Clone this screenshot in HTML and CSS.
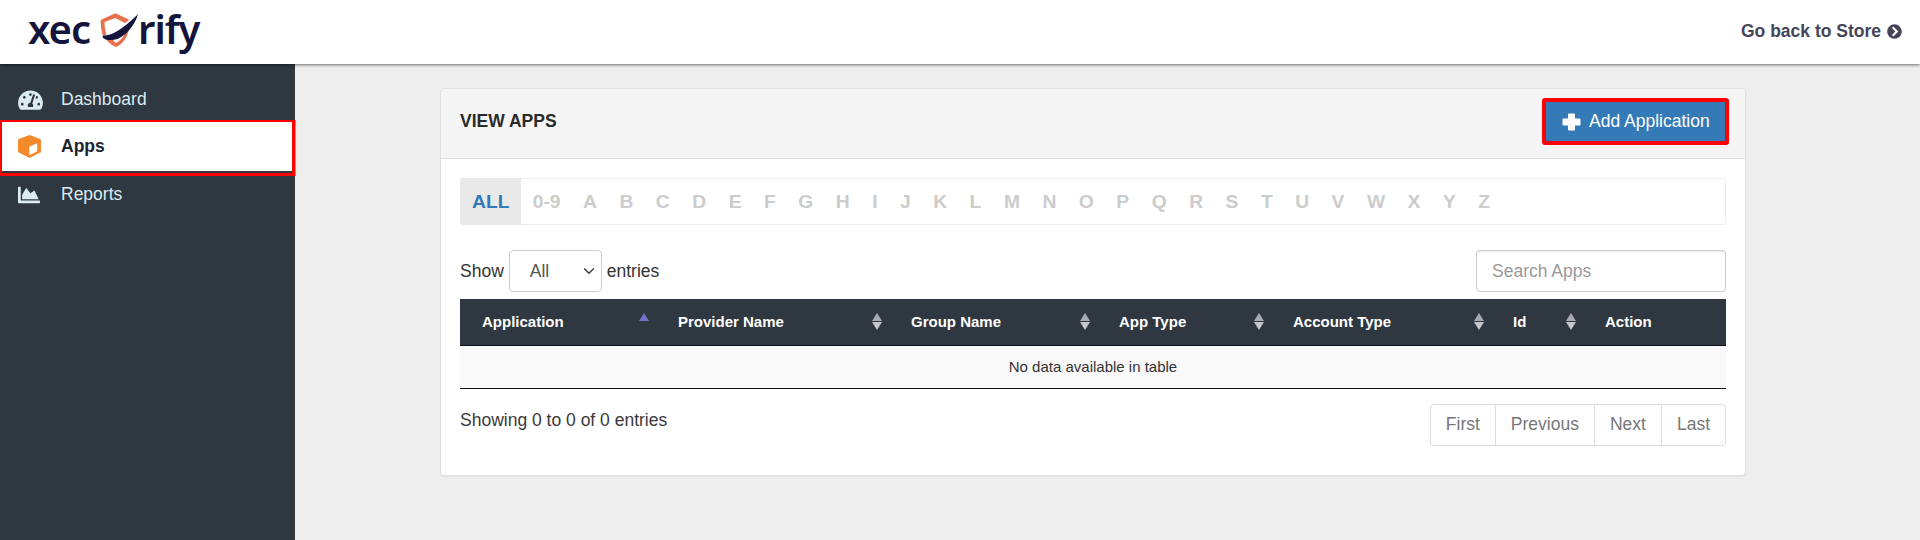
FILE: index.html
```html
<!DOCTYPE html>
<html lang="en">
<head>
<meta charset="utf-8">
<title>View Apps</title>
<link rel="stylesheet" href="styles.css">
</head>
<body>
<header class="topbar">
  <div class="logo">
    <span>xec</span>
    <svg class="logo-mark" viewBox="0 0 44 40" aria-hidden="true">
      <path class="shield" d="M17.3 3.3 L31.3 9.7 L27 13 L17.3 8 L6.5 12 C6.5 17 7.2 21 8.5 24.5 L5.2 26.5 C3.2 21 2.6 15 2.7 10 Z"/>
      <path class="shield" d="M8.5 30 C11 33 14 35.5 18 37 C24 34.5 28.5 29 30.5 21 L26.5 24 C25 28 22 31 18 33 C16.5 32 15.5 31 15 30 Z"/>
      <path class="swoosh" d="M4.7 25.7 C13 26 24 20 40 4.3 C37 14 30 24 20.5 28.5 C14 31 7 30.5 4.7 27.5 Z"/>
    </svg>
    <span>rify</span>
  </div>
  <a class="back-link" href="#">Go back to Store
    <svg class="back-icon" viewBox="0 0 512 512" aria-hidden="true"><path d="M256 8c137 0 248 111 248 248S393 504 256 504 8 393 8 256 119 8 256 8zm113.9 231L234.4 103.5c-9.4-9.4-24.6-9.4-33.9 0l-17 17c-9.4 9.4-9.4 24.6 0 33.9L285.1 256 183.5 357.6c-9.4 9.4-9.4 24.6 0 33.9l17 17c9.4 9.4 24.6 9.4 33.9 0L369.9 273c9.4-9.4 9.4-24.6 0-34z"/></svg>
  </a>
</header>
<div class="layout">
  <nav class="sidebar">
    <a class="nav-item" href="#">
      <span class="nav-icon"><svg class="icon-dash" viewBox="0 0 576 512" aria-hidden="true"><path d="M288 32C128.94 32 0 160.94 0 320c0 52.8 14.25 102.26 39.06 144.8 5.61 9.62 16.3 15.2 27.44 15.2h443c11.14 0 21.83-5.58 27.44-15.2C561.75 422.26 576 372.8 576 320c0-159.06-128.94-288-288-288zm0 64c14.71 0 26.58 10.13 30.32 23.65-1.11 2.26-2.64 4.23-3.45 6.67l-9.22 27.67c-5.13 3.49-10.97 6.01-17.64 6.01-17.67 0-32-14.33-32-32S270.33 96 288 96zM96 384c-17.67 0-32-14.33-32-32s14.33-32 32-32 32 14.33 32 32-14.33 32-32 32zm48-160c-17.67 0-32-14.33-32-32s14.33-32 32-32 32 14.33 32 32-14.33 32-32 32zm246.77-72.41l-61.33 184C343.13 347.33 352 364.54 352 384c0 11.72-3.38 22.55-8.88 32H232.88c-5.5-9.45-8.88-20.28-8.88-32 0-33.94 26.5-61.43 59.9-63.59l61.34-184.01c4.17-12.56 17.73-19.45 30.36-15.17 12.57 4.19 19.35 17.79 15.17 30.36zm14.66 57.2l15.52-46.55c3.47-1.29 7.13-2.23 11.05-2.23 17.67 0 32 14.33 32 32s-14.33 32-32 32c-11.38-.01-20.89-6.28-26.57-15.22zM480 384c-17.67 0-32-14.33-32-32s14.33-32 32-32 32 14.33 32 32-14.33 32-32 32z"/></svg></span>
      Dashboard
    </a>
    <a class="nav-item active" href="#">
      <span class="nav-icon"><svg class="icon-cube" viewBox="0 0 512 512" aria-hidden="true"><path fill-rule="evenodd" d="M239.1 6.3l-208 78c-18.7 7-31.1 25-31.1 45v225.1c0 18.2 10.3 34.8 26.5 42.9l208 104c13.5 6.8 29.4 6.8 42.9 0l208-104c16.3-8.1 26.5-24.8 26.5-42.9V129.3c0-20-12.4-37.9-31.1-44.9l-208-78C262 2.2 250 2.2 239.1 6.3zM252 448V258l176-74v178z"/></svg></span>
      Apps
    </a>
    <a class="nav-item" href="#">
      <span class="nav-icon"><svg class="icon-chart" viewBox="0 0 512 512" aria-hidden="true"><path d="M500 384c6.6 0 12 5.4 12 12v40c0 6.6-5.4 12-12 12H12c-6.6 0-12-5.4-12-12V76c0-6.6 5.4-12 12-12h40c6.6 0 12 5.4 12 12v308h436zM372.7 159.5L288 216l-85.3-113.7c-5.1-6.8-15.5-6.3-19.9 1L96 248v104h384l-89.9-187.8c-3.2-6.5-11.4-8.7-17.4-4.7z"/></svg></span>
      Reports
    </a>
  </nav>
  <main class="content">
    <section class="panel">
      <div class="panel-head">
        <h2 class="panel-title">VIEW APPS</h2>
        <button class="add-btn" type="button">
          <svg class="plus-icon" viewBox="0 0 19 18" aria-hidden="true"><path d="M6.5 1h6v5h5.5v6h-5.5v5h-6v-5h-5.5v-6h5.5z"/></svg>
          Add Application
        </button>
      </div>
      <div class="panel-body">
        <div class="alpha">
          <span class="alpha-item current">ALL</span>
          <span class="alpha-item">0-9</span>
          <span class="alpha-item">A</span><span class="alpha-item">B</span><span class="alpha-item">C</span><span class="alpha-item">D</span><span class="alpha-item">E</span><span class="alpha-item">F</span><span class="alpha-item">G</span><span class="alpha-item">H</span><span class="alpha-item">I</span><span class="alpha-item">J</span><span class="alpha-item">K</span><span class="alpha-item">L</span><span class="alpha-item">M</span><span class="alpha-item">N</span><span class="alpha-item">O</span><span class="alpha-item">P</span><span class="alpha-item">Q</span><span class="alpha-item">R</span><span class="alpha-item">S</span><span class="alpha-item">T</span><span class="alpha-item">U</span><span class="alpha-item">V</span><span class="alpha-item">W</span><span class="alpha-item">X</span><span class="alpha-item">Y</span><span class="alpha-item">Z</span>
        </div>
        <div class="filters">
          <label class="length">Show
            <select class="length-select"><option>All</option><option>10</option><option>25</option></select>
            entries</label>
          <input class="search" type="text" placeholder="Search Apps">
        </div>
        <table class="apps-table">
          <thead>
            <tr>
              <th class="col-app"><div class="th-in">Application<span class="sort asc"></span></div></th>
              <th class="col-provider"><div class="th-in">Provider Name<span class="sort"></span></div></th>
              <th class="col-group"><div class="th-in">Group Name<span class="sort"></span></div></th>
              <th class="col-type"><div class="th-in">App Type<span class="sort"></span></div></th>
              <th class="col-account"><div class="th-in">Account Type<span class="sort"></span></div></th>
              <th class="col-id"><div class="th-in">Id<span class="sort"></span></div></th>
              <th class="col-action"><div class="th-in">Action</div></th>
            </tr>
          </thead>
          <tbody>
            <tr><td class="empty" colspan="7">No data available in table</td></tr>
          </tbody>
        </table>
        <div class="table-foot">
          <div class="info">Showing 0 to 0 of 0 entries</div>
          <div class="pager">
            <a class="page" href="#">First</a><a class="page" href="#">Previous</a><a class="page" href="#">Next</a><a class="page" href="#">Last</a>
          </div>
        </div>
      </div>
    </section>
  </main>
</div>
</body>
</html>
```
FILE: styles.css
```css
* { box-sizing: border-box; }
html, body { height: 100%; }
body {
  margin: 0;
  overflow: hidden;
  background: #eeeeee;
  color: #333;
  font-family: "Liberation Sans", Arial, sans-serif;
  font-size: 17.5px;
  display: flex;
  flex-direction: column;
}
a { text-decoration: none; }

.topbar {
  height: 64px;
  flex: none;
  background: #fff;
  display: flex;
  align-items: center;
  justify-content: space-between;
  padding: 0 18px 0 28px;
  box-shadow: 0 1px 3px rgba(0, 0, 0, .55);
  position: relative;
  z-index: 2;
}
.logo {
  display: flex;
  align-items: flex-start;
  font-family: "Noto Sans", sans-serif;
  font-weight: 600;
  font-size: 40px;
  letter-spacing: -1px;
  line-height: 57px;
  color: #14143c;
  height: 64px;
}
.logo-mark { width: 44px; height: 40px; margin: 10px -3.5px 0 7.5px; flex: none; }
.shield { fill: #e8704a; }
.swoosh { fill: #14143c; }

.back-link {
  display: flex;
  align-items: center;
  gap: 6px;
  color: #45455a;
  font-weight: bold;
  padding-bottom: 2px;
}
.back-icon { width: 15px; height: 15px; fill: #45455a; }

.layout { flex: 1; display: flex; min-height: 0; }
.sidebar {
  width: 295px;
  flex: none;
  background: #2f3740;
  padding-top: 12px;
}
.nav-item {
  height: 47px;
  display: flex;
  align-items: center;
  padding-left: 18px;
  color: #dcebf3;
}
.nav-icon { width: 43px; flex: none; display: flex; align-items: center; }
.icon-dash { width: 25px; height: 22px; fill: #dcebf3; }
.icon-cube { width: 23px; height: 23px; fill: #f58a2a; }
.icon-chart { width: 22px; height: 22px; fill: #dcebf3; }
.nav-item.active {
  height: 49px;
  margin: -1px 3px 0 2px;
  padding-left: 16px;
  background: #fff;
  color: #1d2530;
  font-weight: bold;
  box-shadow: 0 2px 0 #2f3740, 0 1.5px 0 3.5px #f00;
  position: relative;
}

.content { flex: 1; min-width: 0; padding: 24px 0 0 145px; }
.panel {
  width: 1306px;
  background: #fff;
  border: 1px solid #e0e0e0;
  border-radius: 4px;
  box-shadow: 0 1px 1px rgba(0, 0, 0, .05);
}
.panel-head {
  height: 70px;
  background: #f5f5f5;
  border-bottom: 1px solid #ddd;
  display: flex;
  align-items: center;
  justify-content: space-between;
  padding: 0 19px 4px 19px;
  border-radius: 3px 3px 0 0;
}
.panel-title { margin: 0; font-size: 17.5px; font-weight: bold; color: #2a2a2a; }
.add-btn {
  width: 187px;
  height: 47px;
  margin-right: -3px;
  background: #337ab7;
  border: 4px solid #f00;
  border-radius: 3px;
  color: #fff;
  font: inherit;
  display: flex;
  align-items: center;
  gap: 8px;
  padding: 0 0 0 16px;
}
.plus-icon {
  width: 19px;
  height: 18px;
  fill: #fff;
  stroke: #fff;
  stroke-width: 1;
  stroke-linejoin: round;
  flex: none;
}

.panel-body { padding: 19px 19px 29px 19px; }
.alpha {
  height: 47px;
  display: flex;
  border: 1px solid #eee;
  border-radius: 3px;
  font-size: 19.25px;
  font-weight: bold;
  color: #ccc;
}
.alpha-item { padding: 0 11.25px; display: flex; align-items: center; }
.alpha-item.current { padding: 0 12px; background: #e9e9e9; color: #337ab7; margin: -1px 0 -1px -1px; border-radius: 3px 0 0 3px; }

.filters {
  display: flex;
  justify-content: space-between;
  align-items: center;
  margin-top: 25px;
  height: 42px;
}
.length { display: flex; align-items: center; gap: 5px; }
.length-select {
  appearance: none;
  width: 93px;
  height: 42px;
  background: #fff url("data:image/svg+xml,%3Csvg xmlns='http://www.w3.org/2000/svg' width='12' height='8' viewBox='0 0 12 8'%3E%3Cpath d='M1.2 1.5 6 6.2l4.8-4.7' fill='none' stroke='%23444' stroke-width='1.6'/%3E%3C/svg%3E") no-repeat right 6px center;
  border: 1px solid #ccc;
  border-radius: 4px;
  color: #555;
  font: inherit;
  padding: 0 0 0 20px;
}
.search {
  width: 250px;
  height: 42px;
  border: 1px solid #ccc;
  border-radius: 4px;
  font: inherit;
  padding: 0 15px;
  box-shadow: inset 0 1px 1px rgba(0, 0, 0, .075);
}
.search::placeholder { color: #999; }

.apps-table {
  width: 1266px;
  margin-top: 7px;
  table-layout: fixed;
  border-collapse: collapse;
}
.apps-table th {
  height: 46px;
  padding: 0 7px 0 22px;
  background: #2f3740;
  color: #fff;
  font-size: 15px;
  font-weight: bold;
  text-align: left;
  border-bottom: 1px solid #111;
}
.col-app { width: 196px; }
.col-provider { width: 233px; }
.col-group { width: 208px; }
.col-type { width: 174px; }
.col-account { width: 220px; }
.col-id { width: 92px; }
.col-action { width: 143px; }
.th-in { display: flex; align-items: center; justify-content: space-between; }
.sort {
  width: 11px;
  display: flex;
  flex-direction: column;
  gap: 1px;
  align-items: center;
}
.sort::before, .sort::after {
  content: "";
  width: 0;
  height: 0;
  border-left: 5.5px solid transparent;
  border-right: 5.5px solid transparent;
}
.sort::before { border-bottom: 8.5px solid #a6aab0; }
.sort::after { border-top: 8.5px solid #c4c6ca; }
.sort.asc::before { border-bottom-color: #7073c8; }
.sort.asc::after { border-top-color: transparent; }
.empty {
  height: 43px;
  background: #f9f9f9;
  border-bottom: 1px solid #111;
  text-align: center;
  font-size: 15px;
  padding: 0;
}

.table-foot {
  display: flex;
  justify-content: space-between;
  align-items: center;
  margin-top: 15px;
}
.info { margin-bottom: 8px; color: #3a3a3a; }
.pager {
  display: flex;
  height: 42px;
  border: 1px solid #ddd;
  border-radius: 4px;
}
.page {
  display: flex;
  align-items: center;
  padding: 0 15px;
  color: #777;
  border-left: 1px solid #ddd;
}
.page:first-child { border-left: 0; }
```
